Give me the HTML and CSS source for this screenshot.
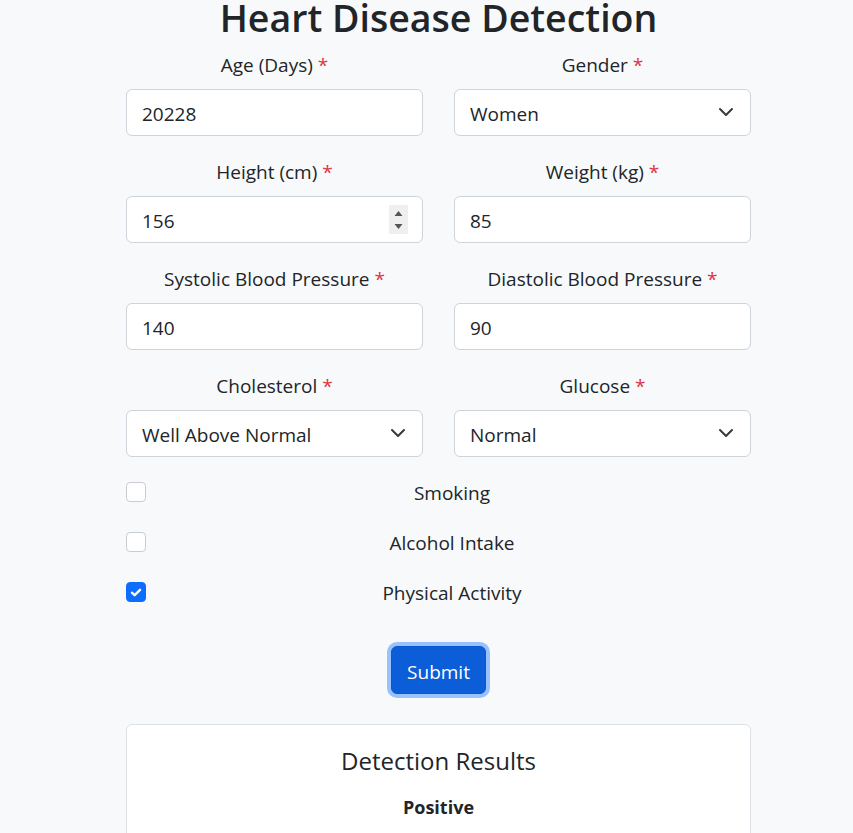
FILE: index.html
```html
<!DOCTYPE html>
<html lang="en">
<head>
<meta charset="utf-8">
<title>Heart Disease Detection</title>
<link rel="stylesheet" href="styles.css">
</head>
<body>
<main class="container">
  <h1 class="title">Heart Disease Detection</h1>
  <form class="form">
    <div class="grid">
      <div class="field">
        <label class="label">Age (Days) <span class="req">*</span></label>
        <input class="control" type="text" value="20228">
      </div>
      <div class="field">
        <label class="label">Gender <span class="req">*</span></label>
        <div class="select-wrap">
          <select class="control select"><option>Women</option><option>Men</option></select>
          <svg class="chev" viewBox="0 0 16 16" width="16" height="16"><path d="m2 5 6 6 6-6" fill="none" stroke="#343a40" stroke-width="2" stroke-linecap="round" stroke-linejoin="round"/></svg>
        </div>
      </div>
      <div class="field">
        <label class="label">Height (cm) <span class="req">*</span></label>
        <div class="select-wrap">
          <input class="control" type="text" value="156">
          <span class="spin"><svg viewBox="0 0 19 29" width="19" height="29"><path d="M5.5 11 9.5 6 13.5 11Z M5.5 19 9.5 24 13.5 19Z" fill="#555"/></svg></span>
        </div>
      </div>
      <div class="field">
        <label class="label">Weight (kg) <span class="req">*</span></label>
        <input class="control" type="text" value="85">
      </div>
      <div class="field">
        <label class="label">Systolic Blood Pressure <span class="req">*</span></label>
        <input class="control" type="text" value="140">
      </div>
      <div class="field">
        <label class="label">Diastolic Blood Pressure <span class="req">*</span></label>
        <input class="control" type="text" value="90">
      </div>
      <div class="field">
        <label class="label">Cholesterol <span class="req">*</span></label>
        <div class="select-wrap">
          <select class="control select"><option>Well Above Normal</option><option>Normal</option><option>Above Normal</option></select>
          <svg class="chev" viewBox="0 0 16 16" width="16" height="16"><path d="m2 5 6 6 6-6" fill="none" stroke="#343a40" stroke-width="2" stroke-linecap="round" stroke-linejoin="round"/></svg>
        </div>
      </div>
      <div class="field">
        <label class="label">Glucose <span class="req">*</span></label>
        <div class="select-wrap">
          <select class="control select"><option>Normal</option><option>Above Normal</option><option>Well Above Normal</option></select>
          <svg class="chev" viewBox="0 0 16 16" width="16" height="16"><path d="m2 5 6 6 6-6" fill="none" stroke="#343a40" stroke-width="2" stroke-linecap="round" stroke-linejoin="round"/></svg>
        </div>
      </div>
    </div>
    <div class="checks">
      <div class="check">
        <span class="box"></span>
        <span class="check-label">Smoking</span>
      </div>
      <div class="check">
        <span class="box"></span>
        <span class="check-label">Alcohol Intake</span>
      </div>
      <div class="check">
        <span class="box checked"><svg viewBox="0 0 20 20" width="19" height="19"><path d="M5.5 10.2 8.5 13 14.5 7" fill="none" stroke="#fff" stroke-width="2.6" stroke-linecap="round" stroke-linejoin="round"/></svg></span>
        <span class="check-label">Physical Activity</span>
      </div>
    </div>
    <div class="actions">
      <button class="btn" type="button">Submit</button>
    </div>
  </form>
  <section class="card">
    <h3 class="card-title">Detection Results</h3>
    <p class="result">Positive</p>
  </section>
</main>
</body>
</html>
```
FILE: styles.css
```css
* { box-sizing: border-box; }
html, body { margin: 0; padding: 0; }
body {
  background: #f8f9fa;
  color: #212529;
  font-family: "Open Sans", "Noto Sans", "Liberation Sans", sans-serif;
  font-size: 19px;
}
.container {
  width: 625px;
  margin: 0 0 0 126px;
}
.title {
  margin: 0 0 15px;
  font-size: 37.5px;
  line-height: 36px;
  font-weight: 600;
  text-align: center;
}
.form { margin: 0; }
.grid {
  display: grid;
  grid-template-columns: 297px 297px;
  column-gap: 31px;
  row-gap: 22px;
}
.field { display: flex; flex-direction: column; }
.label {
  display: block;
  text-align: center;
  line-height: 28px;
  margin-bottom: 10px;
  font-size: 19px;
}
.req { color: #dc3545; }
.select-wrap { position: relative; }
.control {
  display: block;
  width: 100%;
  height: 47px;
  padding: 2px 15px 0;
  font-family: inherit;
  font-size: 19px;
  color: #212529;
  background: #fff;
  border: 1px solid #ced4da;
  border-radius: 6px;
  outline: none;
}
.select { appearance: none; -webkit-appearance: none; }
.chev {
  position: absolute;
  right: 17px;
  top: 15px;
  pointer-events: none;
}
.spin {
  position: absolute;
  right: 15px;
  top: 9px;
  width: 19px;
  height: 29px;
  background: #efefef;
  display: block;
}
.spin svg { display: block; }
.checks { margin-top: 10px; }
.check {
  height: 50px;
  display: flex;
  align-items: center;
}
.box {
  width: 20px;
  height: 20px;
  flex: none;
  border: 1px solid #c8ccd1;
  border-radius: 4px;
  background: #fff;
  display: flex;
  align-items: center;
  justify-content: center;
}
.box.checked { background: #0d6efd; border-color: #0d6efd; }
.box svg { display: block; }
.check-label {
  flex: 1;
  text-align: center;
  margin-left: 7px;
  font-size: 19px;
  padding-top: 1px;
}
.actions {
  margin-top: 29px;
  display: flex;
  justify-content: center;
}
.btn {
  height: 48px;
  width: 95px;
  padding: 3px 0 0;
  font-family: inherit;
  font-size: 19px;
  color: #fff;
  background: #0b5ed7;
  border: 1px solid #0a58ca;
  border-radius: 6px;
  box-shadow: 0 0 0 4px #98c1fe;
}
.card {
  margin-top: 30px;
  background: #fff;
  border: 1px solid #dee2e6;
  border-radius: 6px;
  padding: 21px 20px 30px;
  text-align: center;
}
.card-title {
  margin: 0;
  font-size: 24px;
  line-height: 29px;
  font-weight: 500;
}
.result {
  margin: 19px 0 0;
  font-weight: 700;
  font-size: 18px;
  line-height: 27px;
}
```
